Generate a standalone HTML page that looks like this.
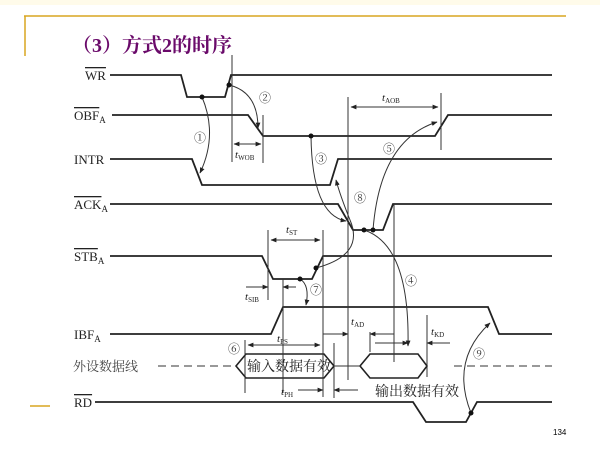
<!DOCTYPE html>
<html><head><meta charset="utf-8"><style>
body{margin:0;width:600px;height:450px;background:#fff;overflow:hidden;}
svg text{font-family:"Liberation Serif","Noto Serif CJK SC",serif;}
</style></head><body>
<svg width="600" height="450" viewBox="0 0 600 450" xmlns="http://www.w3.org/2000/svg">
<defs>
<marker id="a" viewBox="0 0 10 10" refX="9" refY="5" markerWidth="6" markerHeight="6" orient="auto-start-reverse"><path d="M0,1 L10,5 L0,9 z" fill="#222"/></marker>
</defs>
<rect x="0" y="0" width="600" height="5" fill="#fffbea"/>
<line x1="24" y1="16" x2="566" y2="16" stroke="#d9a520" stroke-width="1.5"/>
<line x1="25" y1="16" x2="25" y2="56" stroke="#d9a520" stroke-width="1.5"/>
<line x1="30" y1="406" x2="50" y2="406" stroke="#d9a520" stroke-width="1.5"/>
<text x="72" y="52" font-size="20" font-weight="bold" fill="#6a0a6a" style="font-family:'Liberation Serif','Noto Serif CJK SC',serif">（3）方式2的时序</text>

<g stroke="#222" stroke-width="1.8" fill="none">
<polyline points="110,75 181,75 187,97 225,97 231,75 552,75"/>
<polyline points="112,115 248,115 263,136 435,136 448,115 552,115"/>
<polyline points="110,159 192,159 202,185 330,185 338,159 552,159"/>
<polyline points="110,204 338,204 353,230 383,230 393,204 552,204"/>
<polyline points="110,256 262,256 273,279 312,279 323,256 552,256"/>
<polyline points="110,334 271,334 283,307 488,307 499,334 552,334"/>
<polyline points="95,402 413,402 426,422 466,422 477,402 552,402"/>
<polygon points="236,366 246,354 324,354 334,366 324,378 246,378" stroke-width="1.6"/>
<polygon points="360,366 370,354 418,354 427,366 418,378 370,378" stroke-width="1.6"/>
</g>
<g stroke="#333" stroke-width="1" fill="none">
<line x1="334" y1="366" x2="360" y2="366"/>
<line x1="158" y1="366" x2="236" y2="366" stroke-dasharray="8,5"/>
<line x1="454" y1="366" x2="552" y2="366" stroke-dasharray="8,5"/>
<line x1="232" y1="55" x2="232" y2="162"/>
<line x1="263" y1="115" x2="263" y2="163"/>
<line x1="348" y1="97" x2="348" y2="380"/>
<line x1="441" y1="93" x2="441" y2="150"/>
<line x1="394" y1="204" x2="394" y2="362"/>
<line x1="268" y1="230" x2="268" y2="300"/>
<line x1="323" y1="230" x2="323" y2="397"/>
<line x1="283" y1="279" x2="283" y2="393"/>
<line x1="245" y1="340" x2="245" y2="393"/>
<line x1="370" y1="332" x2="370" y2="352"/>
<line x1="427" y1="315" x2="427" y2="377"/>
<line x1="334" y1="343" x2="334" y2="398"/>
<line x1="351" y1="107" x2="438" y2="107" marker-start="url(#a)" marker-end="url(#a)"/>
<line x1="234" y1="144" x2="261" y2="144" marker-start="url(#a)" marker-end="url(#a)"/>
<line x1="271" y1="240" x2="320" y2="240" marker-start="url(#a)" marker-end="url(#a)"/>
<line x1="246" y1="287" x2="268" y2="287" marker-end="url(#a)"/>
<line x1="296" y1="287" x2="283" y2="287" marker-end="url(#a)"/>
<line x1="248" y1="345" x2="320" y2="345" marker-start="url(#a)" marker-end="url(#a)"/>
<line x1="323" y1="334" x2="348" y2="334" marker-end="url(#a)"/>
<line x1="394" y1="334" x2="370" y2="334" marker-end="url(#a)"/>
<line x1="375" y1="343" x2="408" y2="343" marker-end="url(#a)"/>
<line x1="450" y1="343" x2="427" y2="343" marker-end="url(#a)"/>
<line x1="298" y1="390" x2="323" y2="390" marker-end="url(#a)"/>
<line x1="358" y1="390" x2="334" y2="390" marker-end="url(#a)"/>
<path d="M202,97 Q218,135 200,173" marker-end="url(#a)"/>
<path d="M229,85 Q258,92 258,128" marker-end="url(#a)"/>
<path d="M311,136 Q312,215 346,221" marker-end="url(#a)"/>
<path d="M316,268 Q365,255 350,220 Q340,195 336,180" marker-end="url(#a)"/>
<path d="M373,230 Q380,140 437,122" marker-end="url(#a)"/>
<path d="M364,230 Q410,245 408,346" marker-end="url(#a)"/>
<path d="M300,279 Q310,285 306,305" marker-end="url(#a)"/>
<path d="M471,413 Q450,360 490,323" marker-end="url(#a)"/>
</g>
<g fill="#111">
<circle cx="202" cy="97" r="2.5"/><circle cx="229" cy="85" r="2.5"/>
<circle cx="311" cy="136" r="2.5"/><circle cx="364" cy="230" r="2.5"/>
<circle cx="373" cy="230" r="2.5"/><circle cx="300" cy="279" r="2.5"/>
<circle cx="316" cy="268" r="2.5"/><circle cx="471" cy="413" r="2.5"/>
</g>
<g font-size="13" fill="#222">
<text x="85" y="80" text-decoration="overline">WR</text>
<text x="74" y="120"><tspan text-decoration="overline">OBF</tspan><tspan font-size="9" dy="3">A</tspan></text>
<text x="74" y="164">INTR</text>
<text x="74" y="209"><tspan text-decoration="overline">ACK</tspan><tspan font-size="9" dy="3">A</tspan></text>
<text x="74" y="261"><tspan text-decoration="overline">STB</tspan><tspan font-size="9" dy="3">A</tspan></text>
<text x="74" y="339">IBF<tspan font-size="9" dy="3">A</tspan></text>
<text x="74" y="407" text-decoration="overline">RD</text>
<text x="73" y="371" font-size="13" fill="#444">外设数据线</text>
<text x="247" y="371" font-size="14">输入数据有效</text>
<text x="375" y="396" font-size="14">输出数据有效</text>
</g>
<g font-size="11" fill="#222" font-style="italic">
<text x="382" y="101">t<tspan font-size="7" font-style="normal" dy="2">AOB</tspan></text>
<text x="235" y="158">t<tspan font-size="7" font-style="normal" dy="2">WOB</tspan></text>
<text x="286" y="233">t<tspan font-size="7" font-style="normal" dy="2">ST</tspan></text>
<text x="245" y="300">t<tspan font-size="7" font-style="normal" dy="2">SIB</tspan></text>
<text x="277" y="342">t<tspan font-size="7" font-style="normal" dy="2">PS</tspan></text>
<text x="351" y="325">t<tspan font-size="7" font-style="normal" dy="2">AD</tspan></text>
<text x="431" y="335">t<tspan font-size="7" font-style="normal" dy="2">KD</tspan></text>
<text x="281" y="395">t<tspan font-size="7" font-style="normal" dy="2">PH</tspan></text>
</g>
<g font-size="12" fill="#333" text-anchor="middle" style="font-family:'DejaVu Sans',sans-serif">
<text x="200" y="142">①</text><text x="265" y="102">②</text><text x="321" y="163">③</text>
<text x="411" y="285">④</text><text x="389" y="153">⑤</text><text x="234" y="353">⑥</text>
<text x="316" y="294">⑦</text><text x="360" y="202">⑧</text><text x="479" y="358">⑨</text>
</g>
<text x="553" y="435" font-size="8" fill="#000" style="font-family:'Liberation Sans',sans-serif">134</text>
</svg>
</body></html>
